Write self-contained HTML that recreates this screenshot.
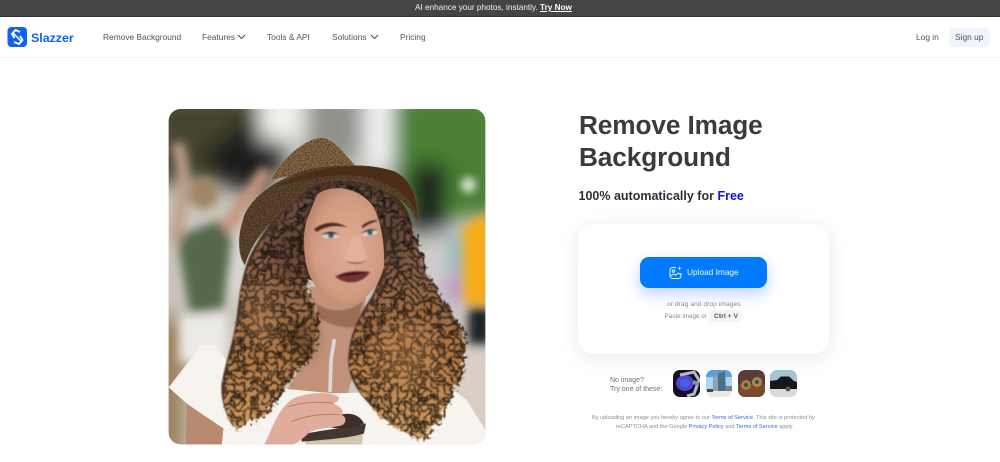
<!DOCTYPE html>
<html lang="en"><head><meta charset="utf-8"><title>Slazzer</title>
<style>
*{box-sizing:border-box}
html,body{margin:0;padding:0;width:1000px;height:462px;overflow:hidden;background:#fff;font-family:"Liberation Sans",sans-serif}
.a{position:absolute;white-space:nowrap}
#bar{left:0;top:0;width:1000px;height:17px;background:#444;border-bottom:1px solid #333}
#hdr{left:0;top:17px;width:1000px;height:41px;background:#fff;border-bottom:1px solid #f6f6f8}
.nav{font-size:8.4px;color:#4e5560;top:31px;line-height:12px}
.grey{color:#8b8b8b;line-height:8px}
.fine{color:#8e8e8e;font-size:5.6px;line-height:7px}
.fine b{color:#3f62e8;font-weight:400}
.th{top:370px;width:27px;height:27px;border-radius:7px;overflow:hidden;filter:blur(.35px)}
</style></head><body>
<div class="a" id="bar"></div>
<div class="a" style="left:415px;top:2px;font-size:8.2px;line-height:11px;color:#f2f2f2">AI enhance your photos, instantly. <u style="font-weight:700;color:#fff">Try Now</u></div>
<div class="a" id="hdr"></div>

<svg class="a" style="left:7px;top:27px" width="20" height="20" viewBox="0 0 20 20"><rect x=".5" width="19.5" height="20" rx="4" fill="#0d62f0"/><g fill="none" stroke="#fff" stroke-width="1.9"><path d="M13 5 8.500 3 5 7l2.500 4"/><path d="M7 15l5 2 3.500-4-2.500-4"/><path d="M6 6l8 8" stroke-width="1.500"/></g></svg>
<div class="a" style="left:31px;top:29.5px;font-size:12.4px;line-height:16px;font-weight:700;color:#0d62f0">Slazzer</div>

<div class="a nav" style="left:103px">Remove Background</div>
<div class="a nav" style="left:202px">Features</div>
<svg class="a" style="left:237px;top:34px" width="9" height="6" viewBox="0 0 9 6"><path d="M1 1l3.5 3.5L8 1" fill="none" stroke="#444b55" stroke-width="1.1"/></svg>
<div class="a nav" style="left:267px">Tools &amp; API</div>
<div class="a nav" style="left:332px">Solutions</div>
<svg class="a" style="left:370px;top:34px" width="9" height="6" viewBox="0 0 9 6"><path d="M1 1l3.5 3.5L8 1" fill="none" stroke="#444b55" stroke-width="1.1"/></svg>
<div class="a nav" style="left:400px">Pricing</div>
<div class="a nav" style="left:916px">Log in</div>
<div class="a" style="left:949px;top:28px;width:41px;height:19px;border-radius:5px;background:#eff3fc"></div>
<div class="a nav" style="left:955px">Sign up</div>

<svg class="a" style="left:160px;top:100px" width="340" height="350" viewBox="0 0 1020 1050">
<defs>
<clipPath id="c"><rect x="26" y="27" width="950" height="1006" rx="36"/></clipPath>
<filter id="b1" x="-30%" y="-30%" width="160%" height="160%"><feGaussianBlur stdDeviation="30"/></filter>
<filter id="b2" x="-30%" y="-30%" width="160%" height="160%"><feGaussianBlur stdDeviation="12"/></filter>
<filter id="b3" x="-20%" y="-20%" width="140%" height="140%"><feGaussianBlur stdDeviation="2"/></filter>
<filter id="b4" x="-30%" y="-30%" width="160%" height="160%"><feGaussianBlur stdDeviation="14"/></filter>
<filter id="b5" x="-40%" y="-40%" width="180%" height="180%"><feGaussianBlur stdDeviation="22"/></filter>
<filter id="hair" x="-10%" y="-10%" width="120%" height="120%" color-interpolation-filters="sRGB">
<feTurbulence type="turbulence" baseFrequency=".05" numOctaves="2" seed="5" result="n"/>
<feColorMatrix in="n" type="matrix" values="2.3 0 0 0 .14  2.3 0 0 0 .14  2.3 0 0 0 .14  0 0 0 0 1" result="g"/>
<feDisplacementMap in="SourceGraphic" in2="n" scale="40" xChannelSelector="R" yChannelSelector="G" result="d"/>
<feBlend in="d" in2="g" mode="multiply" result="m"/>
<feComposite in="m" in2="d" operator="in" result="r"/>
<feGaussianBlur in="r" stdDeviation="1.3"/>
</filter>
<filter id="weave" x="-5%" y="-5%" width="110%" height="110%" color-interpolation-filters="sRGB">
<feTurbulence type="fractalNoise" baseFrequency=".25" numOctaves="2" seed="2" result="n"/>
<feColorMatrix in="n" type="matrix" values="1.2 0 0 0 .25  1.2 0 0 0 .25  1.2 0 0 0 .25  0 0 0 0 1" result="g"/>
<feBlend in="SourceGraphic" in2="g" mode="multiply" result="m"/>
<feComposite in="m" in2="SourceGraphic" operator="in"/>
</filter>
<linearGradient id="hg" gradientUnits="userSpaceOnUse" x1="0" y1="250" x2="0" y2="1020"><stop offset="0" stop-color="#5e463c"/><stop offset=".3" stop-color="#8a6248"/><stop offset=".65" stop-color="#b47a48"/><stop offset="1" stop-color="#d6a468"/></linearGradient>
<radialGradient id="fg" cx=".55" cy=".5" r=".62"><stop offset="0" stop-color="#e0ad95"/><stop offset=".7" stop-color="#d09a80"/><stop offset="1" stop-color="#b07a62"/></radialGradient>
</defs>
<g clip-path="url(#c)">
<rect x="0" y="0" width="1020" height="1050" fill="#c9c6bc"/>
<g filter="url(#b1)">
<rect x="-20" y="-20" width="310" height="270" fill="#45442f"/>
<polygon points="120,170 280,40 390,150 300,290 190,250" fill="#1d1b1b"/>
<rect x="300" y="-20" width="130" height="140" fill="#f2f3ee"/>
<rect x="440" y="-20" width="170" height="200" fill="#90928a"/>
<rect x="615" y="-20" width="85" height="220" fill="#f6f6fa"/>
<rect x="700" y="-20" width="320" height="370" fill="#4a8036"/>
<rect x="750" y="190" width="110" height="220" fill="#1f201a"/>
<rect x="790" y="400" width="120" height="260" fill="#cfcfd0"/>
<rect x="875" y="410" width="40" height="110" fill="#5aa8a8"/>
<rect x="860" y="530" width="50" height="80" fill="#b86ab8"/>
<rect x="780" y="740" width="240" height="320" fill="#d9cfc5"/>
<rect x="-20" y="420" width="100" height="260" fill="#c9c4ba"/>
<rect x="180" y="400" width="80" height="200" fill="#dedcd8"/>
<rect x="-20" y="650" width="90" height="420" fill="#9a7a54"/>
</g>
<circle cx="925" cy="255" r="24" fill="#cfdcc4" filter="url(#b2)"/>
<g filter="url(#b4)">
<polygon points="910,380 985,335 995,610 915,615" fill="#f6ab14"/>
<rect x="925" y="622" width="70" height="110" fill="#1b2028"/>
<polygon points="50,410 180,360 215,420 190,625 90,640" fill="#54684b"/>
<rect x="60" y="645" width="140" height="140" fill="#eceae6"/>
<ellipse cx="130" cy="280" rx="46" ry="48" fill="#a08466"/>
<path d="M50 130 C90 230 60 330 45 430" stroke="#bfa18e" stroke-width="38" fill="none"/>
<path d="M195 390 L320 210" stroke="#c49680" stroke-width="42" fill="none"/>
</g>
<!-- filler behind the hairline -->
<ellipse cx="540" cy="390" rx="215" ry="165" fill="#4a3026"/>
<!-- neck -->
<path d="M450 560 L620 580 L590 790 L560 890 L370 890 L440 770 Z" fill="#c2937a"/>
<path d="M470 610 C510 640 570 640 610 600 L590 680 C550 690 500 670 470 650Z" fill="#9c6d56" filter="url(#b3)"/>
<!-- shirt -->
<path d="M26 862 L125 735 L165 735 L195 775 L215 870 L360 865 L520 880 L880 870 L920 900 L985 1005 L985 1040 L185 1040 L190 985 L80 910 Z" fill="#f7f4f0"/>
<path d="M80 912 L190 985 L185 1040 L78 1040 Z" fill="#b98a70"/>
<!-- hair underlay -->
<g fill="#4a3026" filter="url(#b3)">
<path d="M470 250 C420 270 340 340 290 430 C250 490 240 570 230 650 C220 730 195 790 185 850 C180 900 200 950 220 980 C250 960 290 950 320 930 C345 880 375 830 425 775 C465 750 475 690 465 640 C445 600 430 540 425 480 C415 400 430 320 470 250Z"/>
<path d="M490 245 C570 235 650 250 700 300 C750 350 770 430 790 510 C820 570 865 620 905 690 C910 760 900 820 875 860 C850 930 810 985 780 1015 C735 990 690 975 645 930 C595 880 560 830 565 770 C570 700 595 650 635 590 C655 550 680 480 675 420 C660 340 610 280 490 245Z"/>
</g>
<!-- hair -->
<g filter="url(#hair)" fill="url(#hg)" transform="translate(14 14)">
<path d="M456 236 C410 256 326 326 276 416 C236 476 226 556 216 636 C206 716 181 776 171 836 C166 886 186 936 206 966 C236 946 276 936 306 916 C331 866 361 816 411 761 C451 736 461 676 451 626 C431 586 416 526 411 466 C401 386 416 306 456 236Z"/>
<path d="M476 231 C556 221 636 236 686 286 C736 336 756 416 776 496 C806 556 851 606 891 676 C896 746 886 806 861 846 C836 916 796 971 766 1001 C721 976 676 961 631 916 C581 866 546 816 551 756 C556 686 581 636 621 576 C641 536 666 466 661 406 C646 326 596 266 476 231Z"/>
</g>
<!-- hair shading -->
<g filter="url(#b5)">
<ellipse cx="385" cy="470" rx="32" ry="90" fill="#2e1d18" opacity=".45"/>
<ellipse cx="430" cy="720" rx="30" ry="55" fill="#2e1d18" opacity=".55"/>
<ellipse cx="700" cy="420" rx="28" ry="100" fill="#2e1d18" opacity=".35"/>
<ellipse cx="300" cy="640" rx="45" ry="90" fill="#c99262" opacity=".3"/>
<ellipse cx="740" cy="760" rx="90" ry="100" fill="#d69a5c" opacity=".28"/>
</g>
<!-- face -->
<path d="M470 285 C510 250 600 260 640 320 C665 370 675 440 672 500 C660 550 625 600 570 618 C520 625 480 590 450 530 C430 480 425 410 440 360 Z" fill="url(#fg)"/>
<g filter="url(#b3)">
<path d="M462 388 C490 365 530 362 562 382 C530 374 495 378 470 396Z" fill="#47291f"/>
<path d="M604 380 C620 364 640 358 656 362 C642 366 622 372 610 384Z" fill="#47291f"/>
<path d="M482 408 C500 394 525 394 540 408 C525 419 500 419 482 408Z" fill="#e2d5cc"/>
<circle cx="513" cy="406" r="10" fill="#5f8a90"/><circle cx="513" cy="406" r="4" fill="#222"/>
<path d="M482 408 C500 391 525 392 540 408 C525 399 500 399 482 408Z" fill="#33201c"/>
<path d="M602 404 C615 390 640 386 656 394 C645 408 620 412 602 404Z" fill="#e2d5cc"/>
<circle cx="630" cy="398" r="9" fill="#5f8a90"/><circle cx="630" cy="398" r="4" fill="#222"/>
<path d="M602 404 C615 387 640 383 656 394 C640 389 620 393 602 404Z" fill="#33201c"/>
<path d="M576 410 C572 440 555 465 552 480 C560 495 610 495 622 478 C615 450 604 425 602 405 Z" fill="#eabba3" opacity=".5"/>
<path d="M556 482 C570 495 605 495 622 480 C610 488 575 490 556 482Z" fill="#8c5540"/>
<path d="M526 530 C560 510 600 512 630 516 C612 548 560 560 526 530Z" fill="#763236"/>
<path d="M526 530 C570 526 600 524 630 516 C600 518 560 512 526 530Z" fill="#40191c"/>
<ellipse cx="490" cy="470" rx="35" ry="30" fill="#dc9f8c" opacity=".5"/>
</g>
<!-- hat -->
<path d="M335 240 C360 180 440 110 490 113 C530 125 560 170 585 195 L450 215 Z" fill="#8c6a46" filter="url(#weave)"/>
<path d="M255 497 C230 460 232 400 255 340 C280 290 340 240 440 208 C520 190 640 190 705 215 C755 240 780 290 775 375 C760 330 720 290 660 265 C610 240 540 232 470 250 C430 270 390 310 350 350 C310 390 270 440 255 497Z" fill="#644930" filter="url(#weave)"/>
<path d="M345 262 C430 205 600 180 705 215 C750 240 765 280 772 340 C750 290 690 240 600 228 C510 220 420 240 345 262Z" fill="#4d2d17"/>
<!-- straw -->
<path d="M523 718 L513 780 L510 876" stroke="#d9dadc" stroke-width="11" fill="none"/>
<!-- cup -->
<path d="M440 1005 L612 975 L605 1040 L435 1040 Z" fill="#cfc6ac"/>
<path d="M425 1005 C470 990 560 985 618 970 L612 1000 C570 1015 480 1020 425 1025 Z" fill="#423730"/>
<path d="M505 965 C540 935 590 930 612 970 C580 985 530 990 505 980Z" fill="#392e2a"/>
<!-- hand -->
<path d="M310 1040 C340 980 350 930 400 895 C450 875 510 875 535 890 C540 900 530 908 520 910 C540 920 555 930 545 945 C560 950 560 970 545 976 C510 985 460 985 445 1000 C430 1015 410 1030 390 1040 Z" fill="#e0ac9c"/>
<g stroke="#b07565" stroke-width="2.500" fill="none"><path d="M385 920C430 905 490 905 520 910M395 965C440 945 500 940 540 945"/></g>
</g>
</svg>

<div class="a" style="left:579px;top:110px;font-size:26.2px;line-height:31px;font-weight:700;color:#3b3b3b;letter-spacing:-.1px">Remove Image</div>
<div class="a" style="left:579px;top:142px;font-size:26.2px;line-height:31px;font-weight:700;color:#3b3b3b;letter-spacing:-.1px">Background</div>
<div class="a" style="left:578.5px;top:188px;font-size:12.5px;line-height:16px;font-weight:700;color:#2e2e38">100% automatically for <span style="color:#1414c8">Free</span></div>

<div class="a" style="left:578px;top:224px;width:251px;height:130px;border-radius:16px;background:#fff;box-shadow:0 4px 22px rgba(0,0,0,.09)"></div>
<div class="a" style="left:640px;top:257px;width:127px;height:31px;border-radius:9px;background:#007bff;box-shadow:0 6px 14px rgba(30,90,255,.28)"></div>
<svg class="a" style="left:668px;top:265px" width="15" height="15" viewBox="0 0 15 15" fill="none" stroke="#e8f2ff" stroke-width="1"><path d="M8 2.500H4.500a2.500 2.500 0 0 0-2.500 2.500v6a2.500 2.500 0 0 0 2.500 2.500h6a2.500 2.500 0 0 0 2.500-2.500V8"/><circle cx="5.500" cy="6" r="1.300"/><path d="M2.500 11l3-2 2 1.300 3-2.300 2.500 1.800"/><path d="M11.500 1.500v3.500M9.800 3.200h3.400" stroke-width=".9"/></svg>
<div class="a" style="left:687px;top:266px;font-size:8.3px;line-height:12px;color:#f2f7ff">Upload Image</div>
<div class="a grey" style="left:667px;top:301px;font-size:6.75px">or drag and drop images</div>
<div class="a grey" style="left:664.500px;top:313px;font-size:6.3px">Paste image or</div>
<div class="a" style="left:709px;top:310px;width:33px;height:12px;border-radius:3px;background:#f4f4f4"></div>
<div class="a" style="left:714px;top:312.500px;font-size:6.800px;line-height:8px;font-weight:700;color:#555">Ctrl + V</div>

<div class="a" style="left:610px;top:375.500px;font-size:7px;line-height:9px;color:#6f6f6f">No image?<br>Try one of these:</div>

<svg class="a th" style="left:673px" viewBox="0 0 27 27"><rect width="27" height="27" fill="#11111f"/><ellipse cx="12" cy="13" rx="9" ry="8" fill="#5540d8"/><ellipse cx="12" cy="13" rx="5" ry="4" fill="#3a6ad8"/><path d="M7 5l14-3 5 8-5 14-7 2" fill="none" stroke="#b7bac2" stroke-width="3"/><path d="M20 12l6 2" stroke="#8b8e96" stroke-width="4"/></svg>
<svg class="a th" style="left:706px;width:26px" viewBox="0 0 26 27"><rect width="26" height="27" fill="#a8d4f2"/><rect y="0" width="26" height="7" fill="#5a9fd8"/><polygon points="7,6 19,1 20,21 7,21" fill="#4c6f86"/><polygon points="7,6 12,4 12,21 7,21" fill="#86a4b6"/><rect x="20" y="16" width="6" height="6" fill="#6f8494"/><rect y="21" width="26" height="6" fill="#efe8dc"/><rect y="19" x="1" width="6" height="3" fill="#3d4a3c"/></svg>
<svg class="a th" style="left:738px" viewBox="0 0 27 27"><rect width="27" height="27" fill="#5a3d3c"/><rect y="14" width="27" height="13" fill="#7a4a2e"/><circle cx="8" cy="15" r="5" fill="#a87f3f"/><circle cx="8" cy="15" r="2" fill="#245c44"/><circle cx="19" cy="12" r="5" fill="#b08a44"/><circle cx="19" cy="12" r="2" fill="#245c44"/></svg>
<svg class="a th" style="left:770px" viewBox="0 0 27 27"><rect width="27" height="27" fill="#a5c5d0"/><rect y="19" width="27" height="8" fill="#dbd9d4"/><path d="M0 11 L7 10 L11 6.500 L19 6.500 L24 11 L27 12 L27 19 L0 19Z" fill="#14181c"/><circle cx="18" cy="19" r="2.500" fill="#555"/></svg>

<div class="a fine" style="left:592px;top:415px">By uploading an image you hereby agree to our <b>Terms of Service</b>. This site is protected by</div>
<div class="a fine" style="left:616px;top:423.500px">reCAPTCHA and the Google <b>Privacy Policy</b> and <b>Terms of Service</b> apply</div>
</body></html>
